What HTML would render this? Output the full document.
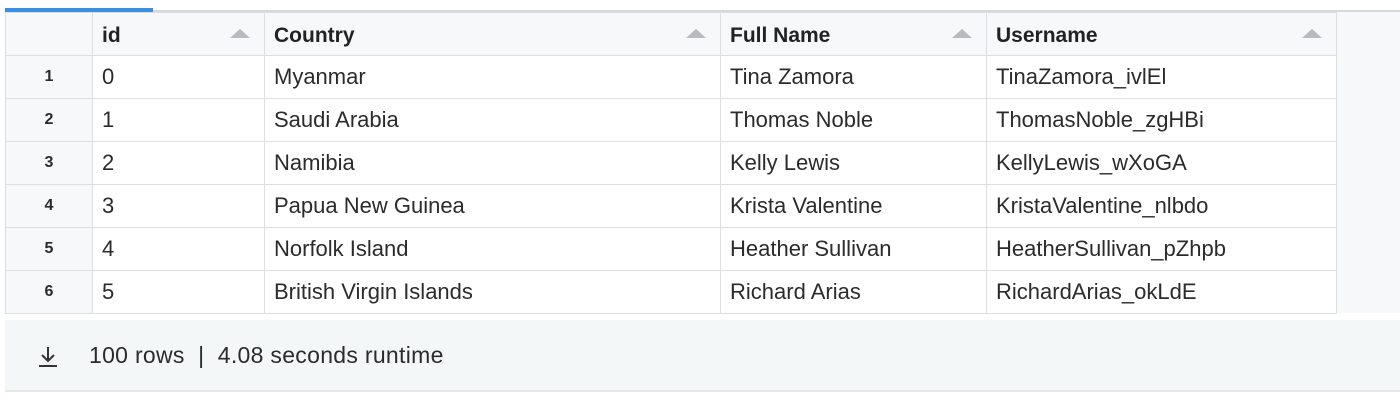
<!DOCTYPE html>
<html><head><style>
body{margin:0;width:1400px;height:401px;background:#fff;font-family:"Liberation Sans",Arial,sans-serif;position:relative;overflow:hidden}
.top{position:absolute;left:5px;top:10px;width:1395px;height:2px;background:#d6d9db}
.blue{position:absolute;left:5px;top:8px;width:148px;height:4px;background:#3b8fe0}
.area{position:absolute;left:5px;top:12px;width:1395px;height:301px;background:#f6f8f9}
table{position:absolute;left:5px;top:12px;border-collapse:collapse;font-size:22px;color:#2b2b2b}
td,th{border:1px solid #dcdfe1;height:43px;padding:0 0 0 9px;text-align:left;box-sizing:border-box;background:#fff;white-space:nowrap}
th{background:#f6f8f9;font-weight:bold;position:relative;height:43px;color:#222;font-size:21px;padding-top:4px}
th .a{position:absolute;right:14px;top:16px;width:0;height:0;border-left:10px solid transparent;border-right:10px solid transparent;border-bottom:9px solid #b8bbbd}
td.n{background:#f6f8f9;text-align:center;padding:0;font-weight:bold;font-size:16px}
.foot{position:absolute;left:5px;top:320px;width:1395px;height:70px;background:#f3f7f8;border-bottom:2px solid #e6e9ea;font-size:23px;color:#2b2b2b;letter-spacing:0.3px}
.foot span{position:absolute;left:84px;top:22px}
</style></head><body>
<div class="top"></div><div class="area"></div><div class="blue"></div>
<table>
<tr><th style="width:87px"></th><th style="width:172px">id<span class="a"></span></th><th style="width:456px">Country<span class="a"></span></th><th style="width:266px">Full Name<span class="a"></span></th><th style="width:350px">Username<span class="a"></span></th></tr>
<tr><td class="n">1</td><td>0</td><td>Myanmar</td><td>Tina Zamora</td><td>TinaZamora_ivlEl</td></tr>
<tr><td class="n">2</td><td>1</td><td>Saudi Arabia</td><td>Thomas Noble</td><td>ThomasNoble_zgHBi</td></tr>
<tr><td class="n">3</td><td>2</td><td>Namibia</td><td>Kelly Lewis</td><td>KellyLewis_wXoGA</td></tr>
<tr><td class="n">4</td><td>3</td><td>Papua New Guinea</td><td>Krista Valentine</td><td>KristaValentine_nlbdo</td></tr>
<tr><td class="n">5</td><td>4</td><td>Norfolk Island</td><td>Heather Sullivan</td><td>HeatherSullivan_pZhpb</td></tr>
<tr><td class="n">6</td><td>5</td><td>British Virgin Islands</td><td>Richard Arias</td><td>RichardArias_okLdE</td></tr>
</table>
<div class="foot">
<svg style="position:absolute;left:30px;top:24px" width="26" height="26" viewBox="0 0 26 26"><path d="M13 3v13M7 11l6 6 6-6M4 22h18" stroke="#333" stroke-width="2" fill="none"/></svg>
<span>100 rows &nbsp;|&nbsp; 4.08 seconds runtime</span>
</div>
</body></html>
